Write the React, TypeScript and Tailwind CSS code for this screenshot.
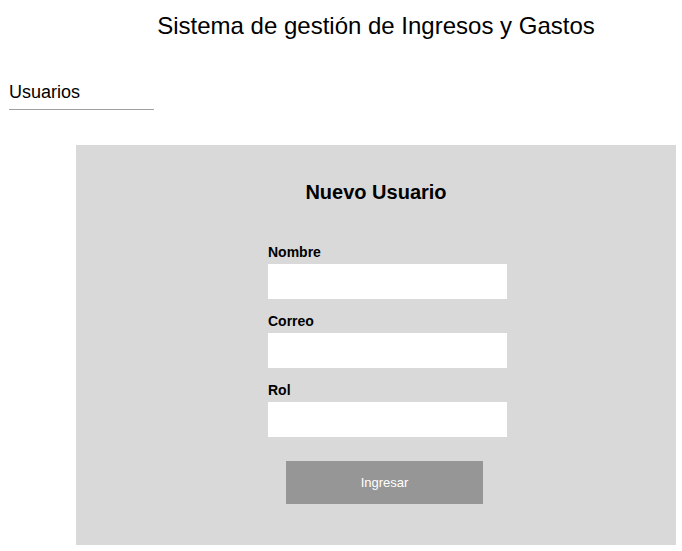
export default function App() {
  const fields = ["Nombre", "Correo", "Rol"];

  return (
    <div className="min-h-[551px] bg-white font-['Liberation_Sans',Arial,sans-serif] text-black">
      {/* header, centred over the same column as the panel */}
      <div className="ml-[76px] w-[600px] pt-[12px] text-center text-[24px] leading-[28px]">
        Sistema de gestión de Ingresos y Gastos
      </div>

      <div className="ml-[9px] mt-[42px] w-[145px] border-b border-[#a0a0a0] pb-[6px] text-[18px] leading-[21px]">
        Usuarios
      </div>

      <div className="ml-[76px] mt-[35px] w-[600px] bg-[#d9d9d9] pt-[36px] pb-[41px]">
        <h2 className="text-center text-[20px] font-bold leading-[23px]">
          Nuevo Usuario
        </h2>

        <form className="ml-[192px] mt-[40px] flex w-[239px] flex-col">
          {fields.map((label, i) => (
            <div key={label} className={i > 0 ? "mt-[14px]" : ""}>
              <label className="block text-[14px] font-bold leading-[16px]">
                {label}
              </label>
              <input
                type="text"
                className="mt-[4px] block h-[35px] w-[239px] bg-white outline-none"
              />
            </div>
          ))}
          <button
            type="button"
            className="ml-[18px] mt-[24px] h-[43px] w-[197px] bg-[#969696] text-[13px] text-white"
          >
            Ingresar
          </button>
        </form>
      </div>
    </div>
  );
}
